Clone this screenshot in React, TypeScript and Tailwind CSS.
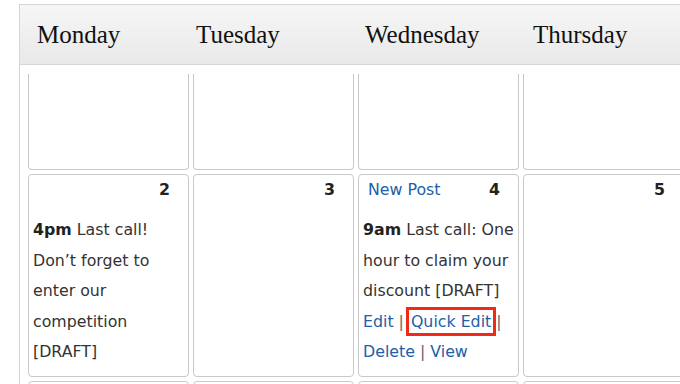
const days = [
    { name: 'Monday', width: 'w-[159px]' },
    { name: 'Tuesday', width: 'w-[169px]' },
    { name: 'Wednesday', width: 'w-[168px]' },
    { name: 'Thursday', width: 'w-[140px]' },
];

const link = 'text-[#2160a8]';

function Cell({ day, newPost, children }: { day?: number; newPost?: boolean; children?: React.ReactNode }) {
    return (
        <div className="h-[203px] w-[161px] shrink-0 rounded-[4px] border border-[#c9c9c9]">
            <div className="flex h-[30px] items-center justify-between pl-[9px] pr-[18px]">
                <span className={link}>{newPost ? 'New Post' : ''}</span>
                <span className="font-bold text-[#222]">{day}</span>
            </div>
            <div className="mt-[10px] pl-[4px] leading-[30.5px] text-[#333]">{children}</div>
        </div>
    );
}

export default function App() {
    return (
        <div
            className="h-[384px] w-[680px] overflow-hidden bg-white"
            style={{ fontFamily: '"DejaVu Sans", sans-serif' }}
        >
            <div className="ml-[19px] mt-[4px] border-l border-t border-[#d4d4d4] text-[15.8px]">
                <div className="flex h-[60px] items-center border-b border-[#d6d6d6] bg-gradient-to-b from-[#f6f6f6] to-[#e9e9e9] pl-[17px]">
                    {days.map((d) => (
                        <div
                            key={d.name}
                            className={`${d.width} shrink-0 text-[25px] text-[#111]`}
                            style={{ fontFamily: '"Liberation Serif", serif' }}
                        >
                            {d.name}
                        </div>
                    ))}
                </div>

                <div className="pl-[8px]">
                    <div className="mt-[9px] flex gap-[4px]">
                        {[0, 1, 2, 3].map((i) => (
                            <div key={i} className="h-[96px] w-[161px] shrink-0 rounded-b-[4px] border-x border-b border-[#c9c9c9]" />
                        ))}
                    </div>

                    <div className="mt-[4px] flex gap-[4px]">
                        <Cell day={2}>
                            <div>
                                <b className="text-[#222]">4pm</b> Last call!
                            </div>
                            <div>Don’t forget to</div>
                            <div>enter our</div>
                            <div>competition</div>
                            <div>[DRAFT]</div>
                        </Cell>
                        <Cell day={3} />
                        <Cell day={4} newPost>
                            <div>
                                <b className="text-[#222]">9am</b> Last call: One
                            </div>
                            <div>hour to claim your</div>
                            <div>discount [DRAFT]</div>
                            <div className="flex items-center whitespace-pre">
                                <span className={link}>Edit</span>
                                <span className="text-[#666]"> |</span>
                                <span className={`${link} -my-[2px] ml-[2px] border-[3px] border-[#f02a14] px-[2px] leading-[23px]`}>
                                    Quick Edit
                                </span>
                                <span className="text-[#666]">|</span>
                            </div>
                            <div className="whitespace-pre">
                                <span className={link}>Delete</span>
                                <span className="text-[#666]"> | </span>
                                <span className={link}>View</span>
                            </div>
                        </Cell>
                        <Cell day={5} />
                    </div>

                    <div className="mt-[4px] flex gap-[4px]">
                        {[0, 1, 2, 3].map((i) => (
                            <div key={i} className="h-[100px] w-[161px] shrink-0 rounded-[4px] border border-[#c9c9c9]" />
                        ))}
                    </div>
                </div>
            </div>
        </div>
    );
}
